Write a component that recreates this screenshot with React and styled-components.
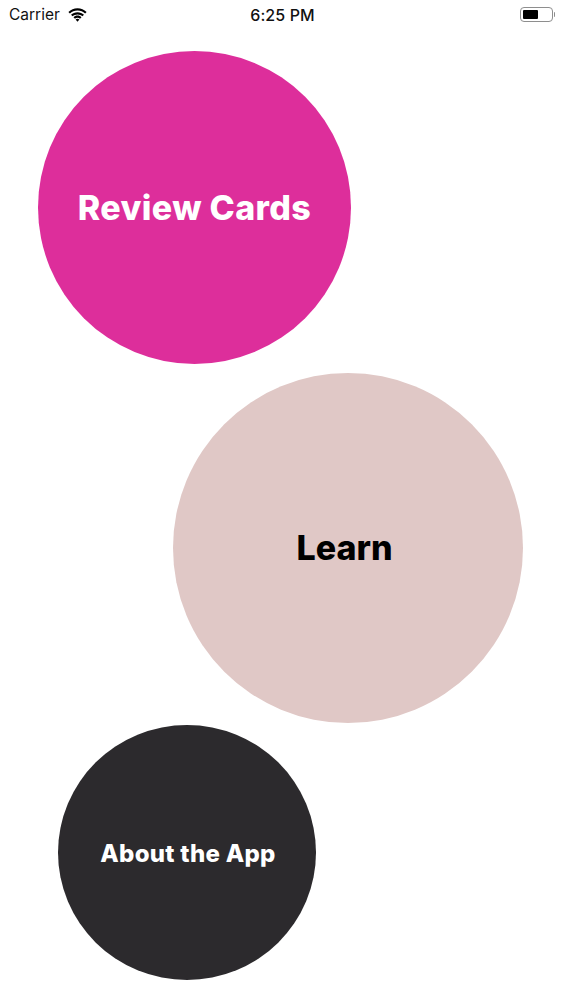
import React from 'react';
import styled, { createGlobalStyle } from 'styled-components';

const GlobalStyle = createGlobalStyle`
  body {
    margin: 0;
    background-color: #fff;
    font-family: Inter, "Liberation Sans", sans-serif;
  }
`;

const Page = styled.div`
  width: 563px;
  height: 1000px;
  overflow: hidden;
`;

const StatusBar = styled.div`
  display: grid;
  grid-template-columns: 1fr auto 1fr;
  align-items: center;
  box-sizing: border-box;
  height: 30px;
  padding: 0 8px 1px 9px;
  font-size: 15.5px;
  color: #111;
`;

const Carrier = styled.div`
  display: flex;
  align-items: center;
  gap: 8px;
`;

const Clock = styled.div`
  font-size: 16px;
  font-weight: 500;
  letter-spacing: 0.1px;
  margin-left: 1px;
`;

const BatteryWrap = styled.div`
  display: flex;
  align-items: center;
  justify-content: flex-end;
`;

const BatteryBody = styled.div`
  box-sizing: border-box;
  width: 33px;
  height: 15px;
  padding: 2px;
  border: 1px solid #8e8e8e;
  border-radius: 4px;
`;

const BatteryLevel = styled.div`
  width: 15px;
  height: 100%;
  background-color: #000;
  border-radius: 1px;
`;

const BatteryCap = styled.div`
  width: 1.5px;
  height: 5px;
  margin-left: 1px;
  background-color: #8e8e8e;
  border-radius: 0 1px 1px 0;
`;

const Menu = styled.div`
  display: flex;
  flex-direction: column;
  padding-top: 21px;
`;

const Circle = styled.button`
  display: flex;
  align-items: center;
  justify-content: center;
  flex: none;
  box-sizing: border-box;
  width: ${(props) => props.w}px;
  height: ${(props) => props.h}px;
  margin-top: ${(props) => props.top}px;
  margin-left: ${(props) => props.left}px;
  padding: ${(props) => props.inset || '0'};
  border: 0;
  border-radius: 50%;
  background-color: ${(props) => props.bg};
  color: ${(props) => props.fg};
  font-family: inherit;
  font-size: ${(props) => props.fontSize}px;
  font-weight: 800;
  letter-spacing: ${(props) => props.spacing || 0}px;
  white-space: nowrap;
`;

const WifiIcon = () => (
  <svg width="19" height="14" viewBox="0 0 19 14">
    <path d="M9.500 2.600c-3 0-5.600 1.100-7.600 3L.4 4C2.800 1.600 6 .2 9.500.2s6.700 1.400 9.100 3.800l-1.500 1.600c-2-1.900-4.600-3-7.600-3z" fill="#000" />
    <path d="M9.500 6.400c-1.900 0-3.600.7-4.900 1.900L3 6.700c1.700-1.600 3.900-2.500 6.500-2.500s4.800.9 6.500 2.500l-1.600 1.600c-1.300-1.200-3-1.900-4.900-1.900z" fill="#000" />
    <path d="M9.500 9.800c-1 0-1.900.4-2.500 1L5.500 9.200c1-1 2.400-1.600 4-1.600s3 .6 4 1.600L12 10.800c-.6-.6-1.500-1-2.500-1z" fill="#000" />
    <path d="M9.500 13.800 7.600 11.600c.5-.5 1.200-.8 1.900-.8s1.400.3 1.900.8z" fill="#000" />
  </svg>
);

const App = () => (
  <Page>
    <GlobalStyle />
    <StatusBar>
      <Carrier>
        <span>Carrier</span>
        <WifiIcon />
      </Carrier>
      <Clock>6:25 PM</Clock>
      <BatteryWrap>
        <BatteryBody>
          <BatteryLevel />
        </BatteryBody>
        <BatteryCap />
      </BatteryWrap>
    </StatusBar>
    <Menu>
      <Circle w={313} h={313} top={0} left={38} spacing={0.35} bg="#dd2e9b" fg="#fff" fontSize={34}>
        Review Cards
      </Circle>
      <Circle w={350} h={350} top={9} left={173} inset="0 7px 2px 0" bg="#e0c8c6" fg="#000" fontSize={34}>
        Learn
      </Circle>
      <Circle w={258} h={255} top={2} left={58} inset="2px 0 0 2px" spacing={0.3} bg="#2c2a2d" fg="#fff" fontSize={24}>
        About the App
      </Circle>
    </Menu>
  </Page>
);

export default App;
